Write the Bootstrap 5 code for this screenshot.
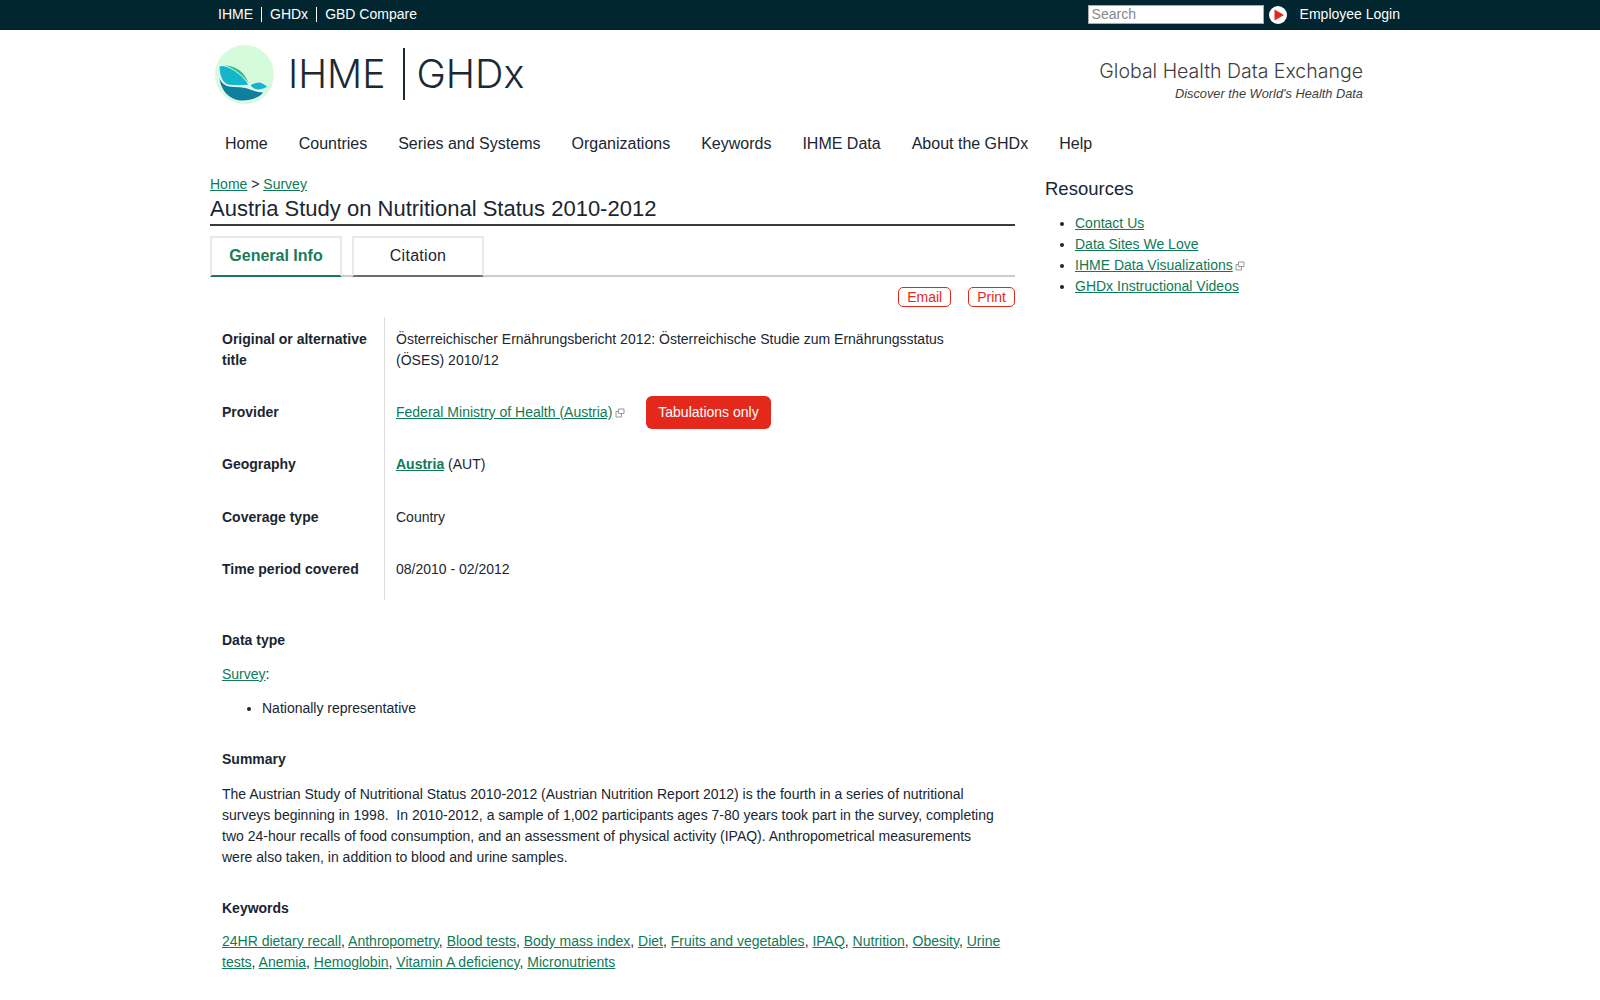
<!DOCTYPE html>
<html lang="en">

<head>
    <meta charset="UTF-8">
    <meta name="viewport" content="width=device-width, initial-scale=1.0">
    <title>Austria Study on Nutritional Status 2010-2012 | GHDx</title>
    <link href="https://cdn.jsdelivr.net/npm/bootstrap@5.3.0/dist/css/bootstrap.min.css" rel="stylesheet">
    <style>
        body {
            font-family: "Liberation Sans", Arial, sans-serif;
            font-size: 14px;
            line-height: 21px;
            color: #1a2631;
            background: #fff;
        }

        a {
            color: #0f7a55;
        }

        .page {
            width: 1180px;
            margin-left: 210px;
        }

        .topbar {
            height: 30px;
            background: #022630;
            color: #fff;
            font-size: 14px;
        }

        .topbar .page {
            padding: 0 8px 1px;
            width: 1200px;
        }

        .toplink+.toplink {
            border-left: 1px solid #fff;
            margin-left: 8px;
            padding-left: 8px;
        }

        .toplink {
            line-height: 15px;
        }

        .search-box {
            width: 176px;
            height: 19px;
            border: 1px solid #aaa;
            background: #fff;
            color: #888;
            padding: 0 3px;
            line-height: 17px;
        }

        .search-go {
            margin-left: 5px;
        }

        .login {
            margin: 0 2px 0 13px;
        }

        .header {
            width: 1153px;
            padding: 15px 0 27px;
        }

        .logo-mark {
            margin-left: 5px;
            margin-right: 13px;
        }

        .logo-text {
            font-size: 39px;
            line-height: 52px;
            padding-bottom: 2px;
            color: #1a2a35;
            font-family: Inter, sans-serif;
            font-weight: 300;
        }

        .logo-text.ghdx {
            font-size: 39.500px;
        }

        .logo-bar {
            width: 2px;
            height: 52px;
            background: #1a2a35;
            margin: 0 11px 2px 18px;
        }

        .tagline {
            padding-top: 14px;
            font-family: Inter, sans-serif;
            font-size: 19.500px;
            font-weight: 300;
            line-height: 24px;
            color: #3d3d3d;
        }

        .tagline small {
            display: block;
            font-family: "Liberation Sans", Arial, sans-serif;
            font-size: 12.800px;
            font-weight: 400;
            font-style: italic;
            line-height: 22px;
        }

        .mainnav {
            gap: 31px;
            line-height: 24px;
            padding: 0 15px;
        }

        .mainnav a {
            color: #1a2631;
            font-size: 16px;
            text-decoration: none;
        }

        .content {
            gap: 30px;
            margin-top: 18px;
        }

        .main-col {
            width: 805px;
        }

        .side-col {
            width: 325px;
            padding-top: 4px;
        }

        .page-title {
            font-size: 22px;
            line-height: 27px;
            border-bottom: 2px solid #3a3a3a;
            padding-bottom: 2px;
            margin-bottom: 10px;
        }

        .side-title {
            font-size: 18.500px;
            margin-bottom: 14px;
        }

        .tabbar {
            gap: 10px;
            border-bottom: 2px solid #ccc;
        }

        .tabbar a {
            width: 132px;
            height: 41px;
            font-size: 16px;
            letter-spacing: .3px;
            line-height: 36px;
            text-align: center;
            text-decoration: none;
            color: #1a2631;
            border: 2px solid #e8e8e8;
            border-bottom: 2px solid #666f78;
            margin-bottom: -2px;
        }

        .tabbar a.active {
            color: #1a7a58;
            font-weight: 700;
            letter-spacing: 0;
            border-bottom-color: #1a7a58;
        }

        .actions {
            gap: 17px;
            margin: 10px 0;
        }

        .btn-pill {
            border: 1px solid #e4281c;
            border-radius: 5px;
            color: #e4281c;
            text-decoration: none;
            padding: 0 8px;
            line-height: 18px;
        }

        .info-label,
        .info-value {
            padding-top: 11px;
            padding-bottom: 20.500px;
        }

        .info-label {
            width: 175px;
            flex: none;
            padding-left: 12px;
            padding-right: 12px;
            font-weight: 700;
            border-right: 1px solid #ddd;
        }

        .info-value {
            padding-left: 11px;
            padding-right: 35px;
        }

        .info-row:first-child>div {
            padding-top: 12px;
            padding-bottom: 19.500px;
        }

        .info-row:last-child>div {
            padding-bottom: 19.500px;
        }

        .badge-red {
            display: inline-block;
            background: #e4281c;
            color: #fff;
            border-radius: 6px;
            padding: 6px 12px;
            margin: -6px 0 -6px 21px;
        }

        .ext {
            width: 10px;
            height: 10px;
            vertical-align: -1px;
            margin-left: 3px;
        }

        .side-col .ext {
            margin-left: 2px;
        }

        h2.block-title {
            font-size: 14px;
            line-height: 21px;
            font-weight: 700;
            margin: 0 0 13px;
        }

        .block {
            padding: 0 12px;
            margin-top: 30px;
        }

        .block ul {
            padding-left: 40px;
            margin: 0;
        }

        .block p {
            margin: 0 0 13px;
        }

        .block p:last-child {
            margin-bottom: 0;
        }

        .block-summary h2.block-title {
            margin-bottom: 14px;
        }

        .block-keywords h2.block-title {
            margin-bottom: 12px;
        }

        .side-col ul {
            padding-left: 30px;
            margin: 0;
        }
    </style>
</head>

<body>
    <div class="topbar">
        <div class="page d-flex align-items-center justify-content-between h-100">
            <div class="d-flex">
                <span class="toplink">IHME</span>
                <span class="toplink">GHDx</span>
                <span class="toplink">GBD Compare</span>
            </div>
            <div class="d-flex align-items-center">
                <div class="search-box">Search</div>
                <svg class="search-go" width="18" height="18" viewBox="0 0 18 18">
                    <circle cx="9" cy="9" r="9" fill="#fff" />
                    <path d="M5.500 3.500 15 9l-9.500 5.500z" fill="#e4281c" />
                </svg>
                <span class="login">Employee Login</span>
            </div>
        </div>
    </div>

    <div class="page header d-flex justify-content-between align-items-start">
        <div class="d-flex align-items-center">
            <svg class="logo-mark" width="60" height="60" viewBox="0 0 60 60">
                <circle cx="29.500" cy="29.500" r="29.500" fill="#d4fcdc" />
                <g stroke="#fff" stroke-width="0.800">
                    <path d="M4 31C6 37 9 40 14 41c6 1 14 0 21 3 5 2 10 3 14 3-3 5-12 9-22 9C14 56 4 44 4 31z" fill="#107f9b" />
                    <path d="M4 21c5-1 13 0 19 6 4 3 8 8 11 13-7 1-15 1-21 0C7 38 4 30 4 21z" fill="#15b6cb" />
                    <path d="M7 20C15 19 24 23 29 29 32 33 34 37 35 40 31 35 27 31 23 28 18 24 12 21 7 20z" fill="#2bc58a" />
                    <path d="M35 40c3-2 7-3 10-3 3 1 6 3 8 5-3 1-6 3-10 3-3 0-6-2-8-5z" fill="#15b6cb" />
                </g>
            </svg>
            <span class="logo-text">IHME</span>
            <span class="logo-bar"></span>
            <span class="logo-text ghdx">GHDx</span>
        </div>
        <div class="text-end tagline">
            Global Health Data Exchange
            <small>Discover the World's Health Data</small>
        </div>
    </div>

    <nav class="page mainnav d-flex">
        <a href="#">Home</a>
        <a href="#">Countries</a>
        <a href="#">Series and Systems</a>
        <a href="#">Organizations</a>
        <a href="#">Keywords</a>
        <a href="#">IHME Data</a>
        <a href="#">About the GHDx</a>
        <a href="#">Help</a>
    </nav>

    <div class="page content d-flex">
        <main class="main-col">
            <div><a href="#">Home</a> &gt; <a href="#">Survey</a></div>
            <h1 class="page-title fw-normal">Austria Study on Nutritional Status 2010-2012</h1>
            <div class="tabbar d-flex">
                <a class="active" href="#">General Info</a>
                <a href="#">Citation</a>
            </div>
            <div class="actions d-flex justify-content-end">
                <a class="btn-pill" href="#">Email</a>
                <a class="btn-pill" href="#">Print</a>
            </div>

            <div>
                <div class="info-row d-flex">
                    <div class="info-label">Original or alternative title</div>
                    <div class="info-value">Österreichischer Ernährungsbericht 2012: Österreichische Studie zum Ernährungsstatus (ÖSES) 2010/12</div>
                </div>
                <div class="info-row d-flex">
                    <div class="info-label">Provider</div>
                    <div class="info-value"><a href="#">Federal Ministry of Health (Austria)</a><svg class="ext" viewBox="0 0 10 10"><path d="M3.500 1h5.500v4.500H3.500zM3.500 3.500H1v5.500h5.500V5.500" fill="none" stroke="#999" /></svg><span class="badge-red">Tabulations only</span></div>
                </div>
                <div class="info-row d-flex">
                    <div class="info-label">Geography</div>
                    <div class="info-value"><a class="fw-bold" href="#">Austria</a> (AUT)</div>
                </div>
                <div class="info-row d-flex">
                    <div class="info-label">Coverage type</div>
                    <div class="info-value">Country</div>
                </div>
                <div class="info-row d-flex">
                    <div class="info-label">Time period covered</div>
                    <div class="info-value">08/2010 - 02/2012</div>
                </div>
            </div>

            <section class="block">
                <h2 class="block-title">Data type</h2>
                <p><a href="#">Survey</a>:</p>
                <ul>
                    <li>Nationally representative</li>
                </ul>
            </section>
            <section class="block block-summary">
                <h2 class="block-title">Summary</h2>
                <p>The Austrian Study of Nutritional Status 2010-2012 (Austrian Nutrition Report 2012) is the fourth in a series of nutritional surveys beginning in 1998.&nbsp; In 2010-2012, a sample of 1,002 participants ages 7-80 years took part in the survey, completing two 24-hour recalls of food consumption, and an assessment of physical activity (IPAQ). Anthropometrical measurements were also taken, in addition to blood and urine samples.</p>
            </section>
            <section class="block block-keywords">
                <h2 class="block-title">Keywords</h2>
                <p><a href="#">24HR dietary recall</a>, <a href="#">Anthropometry</a>, <a href="#">Blood tests</a>, <a href="#">Body mass index</a>, <a href="#">Diet</a>, <a href="#">Fruits and vegetables</a>, <a href="#">IPAQ</a>, <a href="#">Nutrition</a>, <a href="#">Obesity</a>, <a href="#">Urine tests</a>, <a href="#">Anemia</a>, <a href="#">Hemoglobin</a>, <a href="#">Vitamin A deficiency</a>, <a href="#">Micronutrients</a></p>
            </section>
        </main>

        <aside class="side-col">
            <div class="side-title">Resources</div>
            <ul>
                <li><a href="#">Contact Us</a></li>
                <li><a href="#">Data Sites We Love</a></li>
                <li><a href="#">IHME Data Visualizations</a><svg class="ext" viewBox="0 0 10 10"><path d="M3.500 1h5.500v4.500H3.500zM3.500 3.500H1v5.500h5.500V5.500" fill="none" stroke="#999" /></svg></li>
                <li><a href="#">GHDx Instructional Videos</a></li>
            </ul>
        </aside>
    </div>
</body>

</html>
